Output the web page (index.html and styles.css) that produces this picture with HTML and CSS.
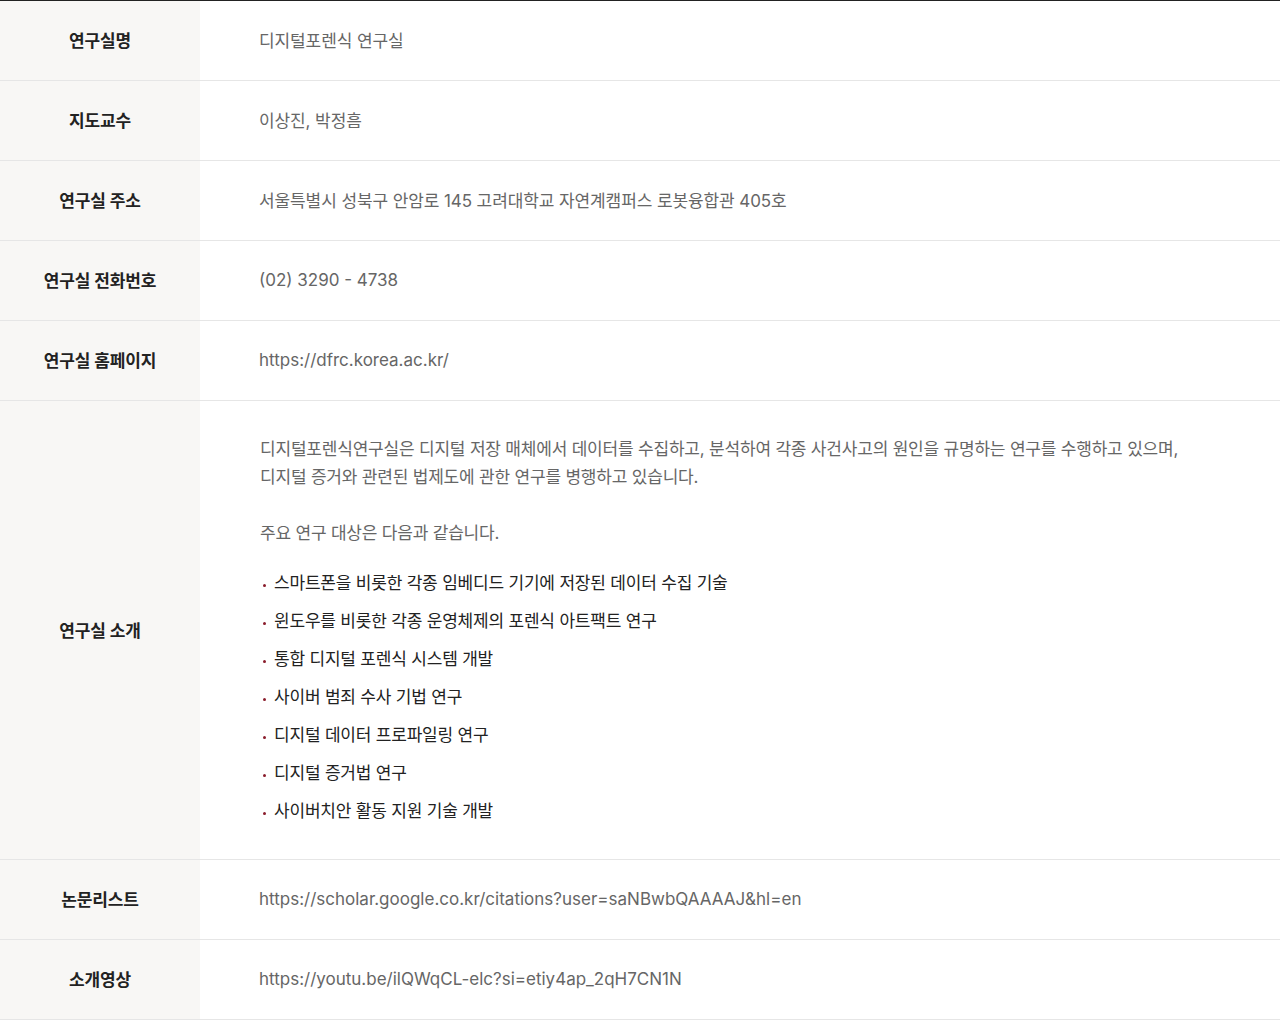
FILE: index.html
```html
<!DOCTYPE html>
<html lang="ko">
<head>
<meta charset="utf-8">
<title>연구실 정보</title>
<link rel="stylesheet" href="styles.css">
</head>
<body>
<div class="info">
  <div class="row">
    <div class="th">연구실명</div>
    <div class="td">디지털포렌식 연구실</div>
  </div>
  <div class="row">
    <div class="th">지도교수</div>
    <div class="td">이상진, 박정흠</div>
  </div>
  <div class="row">
    <div class="th">연구실 주소</div>
    <div class="td">서울특별시 성북구 안암로 145 고려대학교 자연계캠퍼스 로봇융합관 405호</div>
  </div>
  <div class="row">
    <div class="th">연구실 전화번호</div>
    <div class="td td-latin">(02) 3290 - 4738</div>
  </div>
  <div class="row">
    <div class="th">연구실 홈페이지</div>
    <div class="td td-latin">https://dfrc.korea.ac.kr/</div>
  </div>
  <div class="row row-intro">
    <div class="th">연구실 소개</div>
    <div class="td td-intro">
      <p class="para">디지털포렌식연구실은 디지털 저장 매체에서 데이터를 수집하고, 분석하여 각종 사건사고의 원인을 규명하는 연구를 수행하고 있으며,<br>디지털 증거와 관련된 법제도에 관한 연구를 병행하고 있습니다.</p>
      <p class="para para-gap">주요 연구 대상은 다음과 같습니다.</p>
      <ul class="list">
        <li>스마트폰을 비롯한 각종 임베디드 기기에 저장된 데이터 수집 기술</li>
        <li>윈도우를 비롯한 각종 운영체제의 포렌식 아트팩트 연구</li>
        <li>통합 디지털 포렌식 시스템 개발</li>
        <li>사이버 범죄 수사 기법 연구</li>
        <li>디지털 데이터 프로파일링 연구</li>
        <li>디지털 증거법 연구</li>
        <li>사이버치안 활동 지원 기술 개발</li>
      </ul>
    </div>
  </div>
  <div class="row">
    <div class="th">논문리스트</div>
    <div class="td td-latin">https://scholar.google.co.kr/citations?user=saNBwbQAAAAJ&amp;hl=en</div>
  </div>
  <div class="row">
    <div class="th">소개영상</div>
    <div class="td td-latin">https://youtu.be/ilQWqCL-elc?si=etiy4ap_2qH7CN1N</div>
  </div>
</div>
</body>
</html>
```
FILE: styles.css
```css
html, body {
  margin: 0;
  padding: 0;
  background: #fff;
}
body {
  font-family: Inter, "Noto Sans CJK KR", sans-serif;
  font-size: 17px;
  color: #222;
}
.info {
  border-top: 1px solid #222;
}
.row {
  display: flex;
  border-bottom: 1px solid #e6e6e6;
  min-height: 79px;
}
.th {
  width: 200px;
  flex: 0 0 200px;
  background: #f8f7f5;
  display: flex;
  align-items: center;
  justify-content: center;
  font-weight: 700;
  color: #222;
  letter-spacing: -0.1px;
  padding-bottom: 2px;
  box-sizing: border-box;
}
.td {
  flex: 1;
  display: flex;
  align-items: center;
  padding-left: 59px;
  padding-bottom: 2px;
  color: #666;
  letter-spacing: -0.1px;
}
.td-latin {
  letter-spacing: 0;
}
.td-intro {
  display: block;
  padding: 34px 0 34px 60px;
  letter-spacing: -0.2px;
}
.para {
  margin: 0;
  line-height: 28px;
  color: #666;
}
.para-gap {
  margin-top: 28px;
}
.list {
  list-style: none;
  margin: 22px 0 0;
  padding: 0;
}
.list li {
  position: relative;
  padding-left: 14px;
  line-height: 28px;
  margin-bottom: 10px;
  color: #222;
}
.list li:last-child {
  margin-bottom: 0;
}
.list li::before {
  content: "";
  position: absolute;
  left: 3px;
  top: 15px;
  width: 3px;
  height: 3px;
  border-radius: 50%;
  background: #8a1c2b;
}
```
